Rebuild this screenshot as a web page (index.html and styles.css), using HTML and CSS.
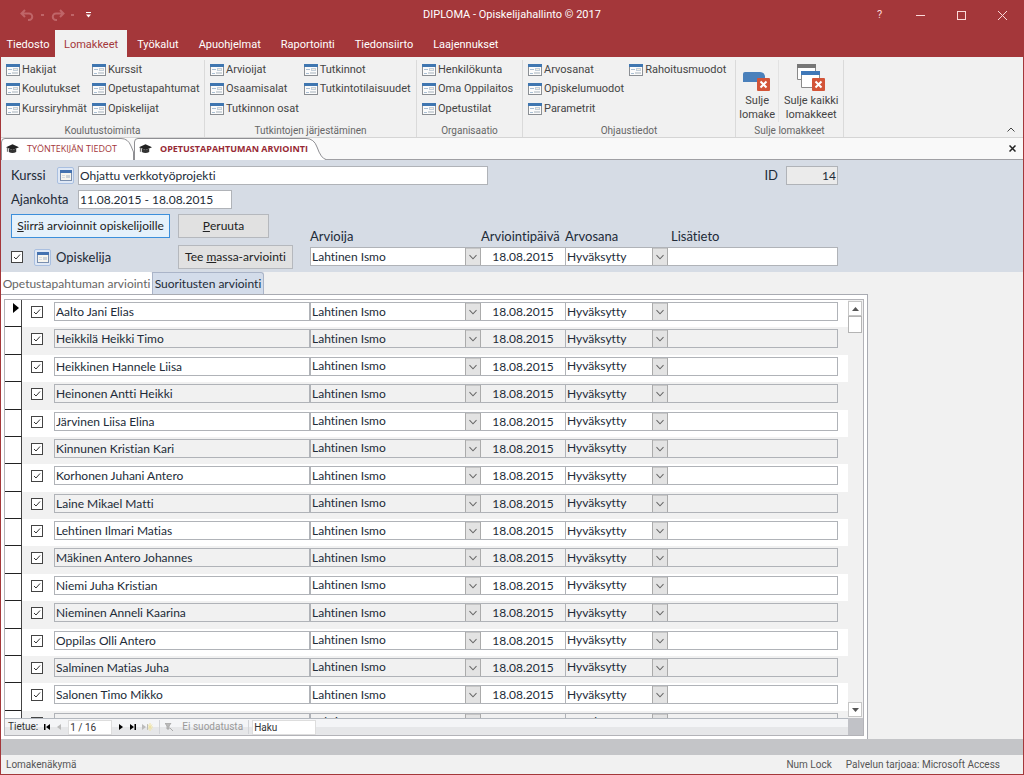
FILE: index.html
```html
<!DOCTYPE html>
<html lang="fi">
<head>
<meta charset="utf-8">
<meta name="viewport" content="width=device-width, initial-scale=1">
<title>DIPLOMA - Opiskelijahallinto</title>
<link rel="stylesheet" href="styles.css">
</head>
<body>
<svg class="defs" aria-hidden="true">
  <symbol id="form" viewBox="0 0 14 12">
    <rect x=".5" y=".5" width="13" height="11" fill="#fbfbfb" stroke="#8b8f94"/>
    <rect width="14" height="3" fill="#3f76b0"/>
    <path d="M2 5.500h4M2 9.500h3" stroke="#a9bfd4"/>
    <rect x="7.500" y="4.500" width="4" height="2" fill="#f5ede0" stroke="#c3cfda"/>
    <rect x="6.500" y="8.500" width="5" height="1" fill="#fff" stroke="#d0d6db"/>
  </symbol>
  <symbol id="calendar" viewBox="0 0 12 11">
    <rect x=".5" y=".5" width="11" height="10" fill="#f7f5ee" stroke="#7a8fae"/>
    <rect width="12" height="3" fill="#4472b0"/>
    <path d="M2 5.500h3M2 7.500h3" stroke="#d5dbe2"/>
    <rect x="6" y="5" width="4" height="3" fill="#cdd3d8"/>
  </symbol>
  <symbol id="cap" viewBox="0 0 14 10">
    <path d="M7 0 14 3 7 6 0 3Z" fill="#222"/>
    <path d="M3 4.500 7 6.200l4-1.700V8.200Q7 10.600 3 8.200Z" fill="#333"/>
    <path d="M1.500 3.500V8" stroke="#555"/>
  </symbol>
  <symbol id="xbadge" viewBox="0 0 13 13">
    <rect width="13" height="13" rx="1" fill="#d35438"/>
    <path d="m3.500 3.500 6 6m0-6-6 6" stroke="#fff" stroke-width="2"/>
  </symbol>
</svg>
<div class="window">
  <header class="titlebar">
    <div class="quick">
      <button aria-label="Kumoa"><svg width="15" height="12" viewBox="0 0 15 12"><path d="M5 1 1.500 4.500 5 8M2 4.500h7a3 3 0 0 1 0 6.500H8" fill="none" stroke="currentColor" stroke-width="2"/></svg></button>
      <span class="dot"></span>
      <button aria-label="Tee uudelleen"><svg width="15" height="12" viewBox="0 0 15 12"><path d="m10 1 3.500 3.500L10 8M13 4.500H6A3 3 0 0 0 6 11h1" fill="none" stroke="currentColor" stroke-width="2"/></svg></button>
      <span class="dot"></span>
      <button class="more" aria-label="Mukauta"><svg width="5" height="6" viewBox="0 0 5 6"><path d="M0 .5h5" stroke="#fff"/><path d="M0 2.500h5L2.500 5.500Z" fill="#fff"/></svg></button>
    </div>
    <h1>DIPLOMA - Opiskelijahallinto © 2017</h1>
    <div class="controls">
      <button aria-label="Ohje">?</button>
      <button aria-label="Pienennä"><svg width="9" height="9"><path d="M0 4.500h9" stroke="currentColor"/></svg></button>
      <button aria-label="Suurenna"><svg width="9" height="9"><rect x=".5" y=".5" width="8" height="8" fill="none" stroke="currentColor"/></svg></button>
      <button aria-label="Sulje"><svg width="9" height="9"><path d="m0 0 9 9m0-9-9 9" stroke="currentColor"/></svg></button>
    </div>
  </header>
  <nav class="menu">
    <button class="file">Tiedosto</button>
    <button class="current">Lomakkeet</button>
    <button>Työkalut</button>
    <button>Apuohjelmat</button>
    <button>Raportointi</button>
    <button>Tiedonsiirto</button>
    <button>Laajennukset</button>
  </nav>
  <div class="ribbon">
    <section class="group">
      <div class="commands">
        <button><svg><use href="#form"/></svg>Hakijat</button>
        <button><svg><use href="#form"/></svg>Koulutukset</button>
        <button><svg><use href="#form"/></svg>Kurssiryhmät</button>
        <button><svg><use href="#form"/></svg>Kurssit</button>
        <button><svg><use href="#form"/></svg>Opetustapahtumat</button>
        <button><svg><use href="#form"/></svg>Opiskelijat</button>
      </div>
      <h2>Koulutustoiminta</h2>
    </section>
    <section class="group">
      <div class="commands">
        <button><svg><use href="#form"/></svg>Arvioijat</button>
        <button><svg><use href="#form"/></svg>Osaamisalat</button>
        <button><svg><use href="#form"/></svg>Tutkinnon osat</button>
        <button><svg><use href="#form"/></svg>Tutkinnot</button>
        <button><svg><use href="#form"/></svg>Tutkintotilaisuudet</button>
      </div>
      <h2>Tutkintojen järjestäminen</h2>
    </section>
    <section class="group">
      <div class="commands">
        <button><svg><use href="#form"/></svg>Henkilökunta</button>
        <button><svg><use href="#form"/></svg>Oma Oppilaitos</button>
        <button><svg><use href="#form"/></svg>Opetustilat</button>
      </div>
      <h2>Organisaatio</h2>
    </section>
    <section class="group">
      <div class="commands">
        <button><svg><use href="#form"/></svg>Arvosanat</button>
        <button><svg><use href="#form"/></svg>Opiskelumuodot</button>
        <button><svg><use href="#form"/></svg>Parametrit</button>
        <button><svg><use href="#form"/></svg>Rahoitusmuodot</button>
      </div>
      <h2>Ohjaustiedot</h2>
    </section>
    <section class="group">
      <div class="large">
        <button><svg width="28" height="28" viewBox="0 0 28 28"><path d="M0 18V10q0-2 2-2h15q4 0 5 4v6Z" fill="#4a80bb"/><use href="#xbadge" x="14" y="14" width="13" height="13"/></svg>Sulje<br>lomake</button>
        <button><svg width="28" height="28" viewBox="0 0 28 28"><path d="M.5.500h18v15H.5Z" fill="#fff" stroke="#8a8a8a"/><path d="M0 0h19v4H0Z" fill="#777"/><path d="M4.500 8.500h18v15h-18Z" fill="#fff" stroke="#8a8a8a"/><path d="M4 7h19v4H4Z" fill="#3f78b8"/><use href="#xbadge" x="15" y="14" width="13" height="13"/></svg>Sulje kaikki<br>lomakkeet</button>
      </div>
      <h2>Sulje lomakkeet</h2>
    </section>
    <button class="collapse" aria-label="Kutista valintanauha"><svg width="8" height="5"><path d="m.5 4.500 3.500-3.500 3.500 3.500" fill="none" stroke="#444"/></svg></button>
  </div>
  <div class="doctabs">
    <button class="doctab"><svg class="shape" viewBox="0 0 133 22" preserveAspectRatio="none"><path d="M.5 22V4Q.5.500 4 .5H120Q127 .5 130 8L132.500 14V22" fill="#fff" stroke="#8f8f93"/></svg><svg class="cap"><use href="#cap"/></svg>TYÖNTEKIJÄN TIEDOT</button>
    <button class="doctab active"><svg class="shape" viewBox="0 0 192 22" preserveAspectRatio="none"><path d="M.5 22V4Q.5.500 4 .5H172Q180 .5 183 9 187 20.500 192 21.500V22" fill="#fff" stroke="#8f8f93"/></svg><svg class="cap"><use href="#cap"/></svg>OPETUSTAPAHTUMAN ARVIOINTI</button>
    <button class="close" aria-label="Sulje välilehti"><svg width="7" height="7"><path d="m.5.500 6 6m0-6-6 6" stroke="#222" stroke-width="1.500"/></svg></button>
  </div>
  <main>
    <form class="header">
      <div class="line">
        <label class="caption" for="course">Kurssi</label>
        <button type="button" class="pick" aria-label="Avaa kurssi"><svg><use href="#calendar"/></svg></button>
        <input class="course" id="course" value="Ohjattu verkkotyöprojekti">
        <label class="idlabel" for="id">ID</label>
        <input class="id" id="id" value="14" readonly>
      </div>
      <div class="line">
        <label class="caption wide" for="period">Ajankohta</label>
        <input class="period" id="period" value="11.08.2015 - 18.08.2015">
      </div>
      <div class="bulk">
        <div class="actions">
          <button type="button" class="push primary"><u>S</u>iirrä arvioinnit opiskelijoille</button>
          <button type="button" class="push cancel"><u>P</u>eruuta</button>
          <div class="student">
            <input type="checkbox" id="all" checked>
            <button type="button" class="pick" aria-label="Avaa opiskelija"><svg><use href="#calendar"/></svg></button>
            <label for="all">Opiskelija</label>
          </div>
          <button type="button" class="push"><span>Tee <u>m</u>assa-arviointi</span></button>
        </div>
        <div class="defaults">
          <label for="assessor">Arvioija</label>
          <label for="date">Arviointipäivä</label>
          <label for="grade">Arvosana</label>
          <label class="extra" for="info">Lisätieto</label>
          <select id="assessor"><option>Lahtinen Ismo</option></select>
          <input id="date" class="date" value="18.08.2015">
          <select id="grade"><option>Hyväksytty</option></select>
          <input id="info" class="info">
        </div>
      </div>
    </form>
    <div class="pagetabs">
      <button class="active">Opetustapahtuman arviointi</button>
      <button>Suoritusten arviointi</button>
    </div>
    <div class="page">
      <div class="subform">
        <div class="list">
          <table>
            <colgroup><col class="c-sel"><col class="c-check"><col class="c-name"><col class="c-assessor"><col class="c-date"><col class="c-grade"><col><col class="c-end"></colgroup>
            <tbody>
              <tr><th><svg width="6" height="10"><path d="M0 0 6 5 0 10Z"/></svg></th><td><input type="checkbox" aria-label="Valitse" checked></td><td><input aria-label="Opiskelija" value="Aalto Jani Elias"></td><td><select aria-label="Arvioija"><option>Lahtinen Ismo</option></select></td><td><input class="date" aria-label="Arviointipäivä" value="18.08.2015"></td><td><select aria-label="Arvosana"><option>Hyväksytty</option></select></td><td><input class="info" aria-label="Lisätieto"></td><td></td></tr>
              <tr><th></th><td><input type="checkbox" aria-label="Valitse" checked></td><td><input aria-label="Opiskelija" value="Heikkilä Heikki Timo"></td><td><select aria-label="Arvioija"><option>Lahtinen Ismo</option></select></td><td><input class="date" aria-label="Arviointipäivä" value="18.08.2015"></td><td><select aria-label="Arvosana"><option>Hyväksytty</option></select></td><td><input class="info" aria-label="Lisätieto"></td><td></td></tr>
              <tr><th></th><td><input type="checkbox" aria-label="Valitse" checked></td><td><input aria-label="Opiskelija" value="Heikkinen Hannele Liisa"></td><td><select aria-label="Arvioija"><option>Lahtinen Ismo</option></select></td><td><input class="date" aria-label="Arviointipäivä" value="18.08.2015"></td><td><select aria-label="Arvosana"><option>Hyväksytty</option></select></td><td><input class="info" aria-label="Lisätieto"></td><td></td></tr>
              <tr><th></th><td><input type="checkbox" aria-label="Valitse" checked></td><td><input aria-label="Opiskelija" value="Heinonen Antti Heikki"></td><td><select aria-label="Arvioija"><option>Lahtinen Ismo</option></select></td><td><input class="date" aria-label="Arviointipäivä" value="18.08.2015"></td><td><select aria-label="Arvosana"><option>Hyväksytty</option></select></td><td><input class="info" aria-label="Lisätieto"></td><td></td></tr>
              <tr><th></th><td><input type="checkbox" aria-label="Valitse" checked></td><td><input aria-label="Opiskelija" value="Järvinen Liisa Elina"></td><td><select aria-label="Arvioija"><option>Lahtinen Ismo</option></select></td><td><input class="date" aria-label="Arviointipäivä" value="18.08.2015"></td><td><select aria-label="Arvosana"><option>Hyväksytty</option></select></td><td><input class="info" aria-label="Lisätieto"></td><td></td></tr>
              <tr><th></th><td><input type="checkbox" aria-label="Valitse" checked></td><td><input aria-label="Opiskelija" value="Kinnunen Kristian Kari"></td><td><select aria-label="Arvioija"><option>Lahtinen Ismo</option></select></td><td><input class="date" aria-label="Arviointipäivä" value="18.08.2015"></td><td><select aria-label="Arvosana"><option>Hyväksytty</option></select></td><td><input class="info" aria-label="Lisätieto"></td><td></td></tr>
              <tr><th></th><td><input type="checkbox" aria-label="Valitse" checked></td><td><input aria-label="Opiskelija" value="Korhonen Juhani Antero"></td><td><select aria-label="Arvioija"><option>Lahtinen Ismo</option></select></td><td><input class="date" aria-label="Arviointipäivä" value="18.08.2015"></td><td><select aria-label="Arvosana"><option>Hyväksytty</option></select></td><td><input class="info" aria-label="Lisätieto"></td><td></td></tr>
              <tr><th></th><td><input type="checkbox" aria-label="Valitse" checked></td><td><input aria-label="Opiskelija" value="Laine Mikael Matti"></td><td><select aria-label="Arvioija"><option>Lahtinen Ismo</option></select></td><td><input class="date" aria-label="Arviointipäivä" value="18.08.2015"></td><td><select aria-label="Arvosana"><option>Hyväksytty</option></select></td><td><input class="info" aria-label="Lisätieto"></td><td></td></tr>
              <tr><th></th><td><input type="checkbox" aria-label="Valitse" checked></td><td><input aria-label="Opiskelija" value="Lehtinen Ilmari Matias"></td><td><select aria-label="Arvioija"><option>Lahtinen Ismo</option></select></td><td><input class="date" aria-label="Arviointipäivä" value="18.08.2015"></td><td><select aria-label="Arvosana"><option>Hyväksytty</option></select></td><td><input class="info" aria-label="Lisätieto"></td><td></td></tr>
              <tr><th></th><td><input type="checkbox" aria-label="Valitse" checked></td><td><input aria-label="Opiskelija" value="Mäkinen Antero Johannes"></td><td><select aria-label="Arvioija"><option>Lahtinen Ismo</option></select></td><td><input class="date" aria-label="Arviointipäivä" value="18.08.2015"></td><td><select aria-label="Arvosana"><option>Hyväksytty</option></select></td><td><input class="info" aria-label="Lisätieto"></td><td></td></tr>
              <tr><th></th><td><input type="checkbox" aria-label="Valitse" checked></td><td><input aria-label="Opiskelija" value="Niemi Juha Kristian"></td><td><select aria-label="Arvioija"><option>Lahtinen Ismo</option></select></td><td><input class="date" aria-label="Arviointipäivä" value="18.08.2015"></td><td><select aria-label="Arvosana"><option>Hyväksytty</option></select></td><td><input class="info" aria-label="Lisätieto"></td><td></td></tr>
              <tr><th></th><td><input type="checkbox" aria-label="Valitse" checked></td><td><input aria-label="Opiskelija" value="Nieminen Anneli Kaarina"></td><td><select aria-label="Arvioija"><option>Lahtinen Ismo</option></select></td><td><input class="date" aria-label="Arviointipäivä" value="18.08.2015"></td><td><select aria-label="Arvosana"><option>Hyväksytty</option></select></td><td><input class="info" aria-label="Lisätieto"></td><td></td></tr>
              <tr><th></th><td><input type="checkbox" aria-label="Valitse" checked></td><td><input aria-label="Opiskelija" value="Oppilas Olli Antero"></td><td><select aria-label="Arvioija"><option>Lahtinen Ismo</option></select></td><td><input class="date" aria-label="Arviointipäivä" value="18.08.2015"></td><td><select aria-label="Arvosana"><option>Hyväksytty</option></select></td><td><input class="info" aria-label="Lisätieto"></td><td></td></tr>
              <tr><th></th><td><input type="checkbox" aria-label="Valitse" checked></td><td><input aria-label="Opiskelija" value="Salminen Matias Juha"></td><td><select aria-label="Arvioija"><option>Lahtinen Ismo</option></select></td><td><input class="date" aria-label="Arviointipäivä" value="18.08.2015"></td><td><select aria-label="Arvosana"><option>Hyväksytty</option></select></td><td><input class="info" aria-label="Lisätieto"></td><td></td></tr>
              <tr><th></th><td><input type="checkbox" aria-label="Valitse" checked></td><td><input aria-label="Opiskelija" value="Salonen Timo Mikko"></td><td><select aria-label="Arvioija"><option>Lahtinen Ismo</option></select></td><td><input class="date" aria-label="Arviointipäivä" value="18.08.2015"></td><td><select aria-label="Arvosana"><option>Hyväksytty</option></select></td><td><input class="info" aria-label="Lisätieto"></td><td></td></tr>
              <tr><th></th><td><input type="checkbox" aria-label="Valitse" checked></td><td><input aria-label="Opiskelija" value="Timörönen Aliza Maija"></td><td><select aria-label="Arvioija"><option>Lahtinen Ismo</option></select></td><td><input class="date" aria-label="Arviointipäivä" value="18.08.2015"></td><td><select aria-label="Arvosana"><option>Hyväksytty</option></select></td><td><input class="info" aria-label="Lisätieto"></td><td></td></tr>
            </tbody>
          </table>
        </div>
        <div class="scroll">
          <button aria-label="Ylös"><svg width="7" height="4"><path d="M0 4 3.500 0 7 4Z"/></svg></button>
          <div class="thumb"></div>
          <button class="down" aria-label="Alas"><svg width="7" height="4"><path d="M0 0h7L3.500 4Z"/></svg></button>
        </div>
        <div class="recordnav">
          <label for="record">Tietue:</label>
          <button aria-label="Ensimmäinen"><svg width="6" height="6"><path d="M0 0h1.500v6H0ZM6 0v6L2 3Z"/></svg></button>
          <button aria-label="Edellinen" disabled><svg width="6" height="6"><path d="M5 0v6L1 3Z"/></svg></button>
          <input id="record" value="1 / 16">
          <button aria-label="Seuraava"><svg width="6" height="6"><path d="M1 0v6l4-3Z"/></svg></button>
          <button aria-label="Viimeinen"><svg width="6" height="6"><path d="M6 0H4.500v6H6ZM0 0v6l4-3Z"/></svg></button>
          <button aria-label="Uusi" disabled><svg width="11" height="8"><path d="M0 1v6l4-3Z"/><path d="M5 1h1v6H5Z"/><path d="M8 0v8M6 4h5M6 1.500l4 5m0-5-4 5" stroke="#efe3a4"/></svg></button>
          <button class="filter" disabled><svg width="8" height="8"><path d="M0 0h6L4 3v3H2V3ZM5 5l3 3" stroke="#aaa"/></svg>Ei suodatusta</button>
          <input class="search" aria-label="Haku" value="Haku">
        </div>
        <div class="corner"></div>
      </div>
    </div>
    <div class="footer"></div>
  </main>
  <footer class="status">
    <span>Lomakenäkymä</span>
    <span class="lock">Num Lock</span>
    <span>Palvelun tarjoaa: Microsoft Access</span>
  </footer>
</div>
</body>
</html>
```
FILE: styles.css
```css
* { box-sizing: border-box; }
body {
  margin: 0;
  font: 11px/14px Roboto, "Noto Sans", sans-serif;
  font-variant-ligatures: none;
  color: #444;
}
button, input, select { margin: 0; font: inherit; font-variant-ligatures: none; color: inherit; }
button {
  display: flex;
  align-items: center;
  justify-content: center;
  padding: 0;
  border: 0;
  background: none;
  white-space: nowrap;
}
h1, h2 { margin: 0; font: inherit; }
.defs { position: absolute; width: 0; height: 0; }
.window {
  display: flex;
  flex-direction: column;
  height: 100vh;
  border: 1px solid #a4373a;
  border-top: 0;
  background: #f1f1f1;
}

/* Title bar and menu */
.titlebar {
  display: grid;
  grid-template-columns: 1fr auto 1fr;
  align-items: center;
  height: 30px;
  background: #a4373a;
  color: #fff;
}
.quick { display: flex; align-items: center; gap: 6px; padding-left: 19px; color: #bf6568; }
.quick .more { margin-left: 6px; }
.dot { width: 3px; height: 2px; background: #bf6568; }
.controls { display: flex; justify-content: flex-end; color: #fbd9d9; }
.controls button { width: 41px; }
.menu { display: flex; height: 27px; background: #a4373a; color: #fff; }
.menu button { padding: 2px 10px 0; }
.menu .file { width: 54px; padding: 2px 0 0; }
.menu .current { padding: 2px 9px 0; background: #f1f1f1; color: #a4373a; }

/* Ribbon */
.ribbon {
  display: grid;
  grid-template-columns: 204px 212px 106px 213px 108px 1fr;
  height: 81px;
  border-bottom: 1px solid #d5d5d5;
}
.group {
  display: flex;
  flex-direction: column;
  justify-content: space-between;
  margin: 3px 0 0;
  border-right: 1px solid #dadada;
}
.commands {
  display: grid;
  grid-auto-flow: column;
  grid-template-rows: 19px 20px 19px;
  grid-auto-columns: max-content;
  column-gap: 5px;
  padding-left: 5px;
}
.commands button { justify-content: flex-start; gap: 2px; }
.commands svg { width: 14px; height: 12px; }
.group h2 { font-size: 10px; line-height: 13px; text-align: center; color: #666; }
.large { display: flex; }
.large button { flex-direction: column; flex: 2; padding-top: 4px; }
.large button + button { flex: 3; border-left: 1px solid #e2e2e2; }
.large svg { margin-bottom: 2px; }
.collapse { align-self: end; justify-self: end; padding: 5px 8px; }

/* Document tabs */
.doctabs { display: flex; height: 22px; background: #f9f9f9; border-bottom: 1px solid #a0a0a4; }
.doctab { position: relative; z-index: 0; justify-content: flex-start; gap: 8px; width: 133px; height: 22px; padding-left: 5px; font-family: "Open Sans", "Noto Sans", sans-serif; font-size: 9px; color: #a4373a; }
.doctab.active { z-index: 1; width: 192px; font-weight: 700; color: #972a35; }
.shape { position: absolute; inset: 0; z-index: -1; width: 100%; height: 100%; }
.cap { flex: none; width: 13px; height: 10px; }
.close { margin-left: auto; width: 22px; }

/* Form controls */
main {
  display: flex;
  flex: 1;
  flex-direction: column;
  min-height: 0;
  font: 12px/16px Lato, "Noto Sans", sans-serif;
  font-variant-ligatures: none;
  color: #222b38;
}
main input:not([type="checkbox"]), main select {
  display: block;
  width: 100%;
  min-width: 0;
  height: 19px;
  padding: 0 1px;
  border: 1px solid #b0b3b8;
  border-radius: 0;
  background-color: #fff;
}
main select {
  appearance: none;
  background: #fff url("data:image/svg+xml,%3Csvg xmlns='http://www.w3.org/2000/svg' width='16' height='18'%3E%3Crect x='.5' y='.5' width='15' height='17' fill='%23e3e3e3' stroke='%23ababab'/%3E%3Cpath d='m4.500 7.500 3.500 3.500 3.500-3.500' fill='none' stroke='%23666'/%3E%3C/svg%3E") no-repeat right center;
}
input[type="checkbox"] {
  appearance: none;
  display: block;
  width: 12px;
  height: 12px;
  margin: 0;
  border: 1px solid #444;
  background: #fff url("data:image/svg+xml,%3Csvg xmlns='http://www.w3.org/2000/svg' width='10' height='10'%3E%3Cpath d='m2 5 2 2 4-4.500' fill='none' stroke='%23333'/%3E%3C/svg%3E") no-repeat center;
}
main input.date { border-left: 0; text-align: center; }
main input.info { border-left: 0; }
main select, main input.date { border-right: 0; }

/* Form header */
.header { padding: 5px 10px 3px; background: #d6dce5; }
.line { display: flex; align-items: center; height: 20px; margin-bottom: 4px; font-size: 13px; }
.line input { font-size: 12px; }
.caption { width: 46px; }
.caption.wide { width: 67px; }
.pick { width: 17px; height: 17px; margin-right: 4px; border: 1px solid #a9bfe0; border-radius: 2px; background: #dfe8f5; }
.pick svg { width: 12px; height: 11px; }
.line .course { width: 410px; }
.idlabel { margin-left: auto; margin-right: 8px; }
.line .id { width: 52px; margin-right: 175px; text-align: right; background: #ebebeb; }
.line .period { width: 154px; }
.bulk { display: flex; padding-top: 1px; }
.actions {
  display: grid;
  grid-template-columns: 159px 115px;
  grid-template-rows: 24px 24px;
  gap: 7px 8px;
  width: 299px;
}
.push { border: 1px solid #b5b8bd; background: #e1e1e1; color: #222; }
.push.primary { border-color: #3c8fdb; background: #e5f1fb; }
.push.cancel { width: 91px; }
.student { display: flex; align-items: center; font-size: 13px; }
.student .pick { margin: 0 5px 0 11px; }
.defaults {
  display: grid;
  flex: 1;
  grid-template-columns: 171px 84px 103px 1fr;
  align-content: end;
  margin-right: 175px;
  padding-bottom: 3px;
}
.defaults label { font-size: 13px; margin-bottom: 3px; white-space: nowrap; }
.defaults .extra { padding-left: 3px; }

/* Page tabs */
.pagetabs { display: flex; height: 22px; }
.pagetabs button { width: 112px; border: 1px solid #aab4c8; border-bottom: 0; border-radius: 0 3px 0 0; background: #d3dcea; }
.pagetabs .active { width: 151px; background: #fff; border-color: #fff; color: #666; }
.page {
  display: flex;
  flex: 1;
  min-height: 0;
  margin-right: 155px;
  padding: 4px 3px 3px;
  border: 1px solid #a9abb2;
  border-width: 1px 1px 0 0;
  background: #fff;
}

/* Continuous list */
.subform {
  display: grid;
  flex: 1;
  grid-template-columns: 1fr 15px;
  grid-template-rows: minmax(0, 1fr) 17px;
  border: 1px solid #b3b3b8;
  min-width: 0;
}
.list { overflow: hidden; min-height: 0; }
.list table { width: 100%; height: 438px; table-layout: fixed; border-collapse: separate; border-spacing: 0; }
.c-sel { width: 17px; }
.c-check { width: 32px; }
.c-name { width: 256px; }
.c-assessor { width: 171px; }
.c-date { width: 84px; }
.c-grade { width: 103px; }
.c-end { width: 10px; }
.list td { padding: 2px 0 0; vertical-align: top; }
.list th { padding: 0; border-right: 1px solid #444; border-bottom: 1px solid #222; background: #fff; vertical-align: top; }
.list th svg { display: block; margin: 3px 2px 0 auto; }
.list td input[type="checkbox"] { margin: 4px 0 0 9px; }
.list tr:nth-child(even) td { background: #f1f1f1; }
.list tr:nth-child(even) input:not([type="checkbox"]), .list tr:nth-child(even) select { background-color: #f1f1f1; }
.scroll { display: flex; flex-direction: column; padding: 1px 1px 1px 0; background: #f1f1f1; }
.scroll button { height: 15px; border: 1px solid #c6c6c6; background: #fff; }
.scroll svg { fill: #555; }
.thumb { height: 17px; border: 1px solid #b4b4b4; background: #fff; }
.scroll .down { margin-top: auto; }
.recordnav {
  display: flex;
  align-items: center;
  gap: 6px;
  padding-left: 3px;
  border-top: 1px solid #b3b8bf;
  background: linear-gradient(#f4f5f7 50%, #e6e7e9 50%);
  font: 10px/14px Roboto, "Noto Sans", sans-serif;
  color: #333;
}
.recordnav label { white-space: nowrap; }
.recordnav button:disabled { color: #999; }
.recordnav button:disabled svg { fill: #bbb; }
main .recordnav input { width: 44px; height: 15px; border-color: #ddd; }
main .recordnav .search { width: 64px; margin-left: -3px; }
.recordnav .filter { gap: 9px; width: 90px; border: 1px solid #d2d4d8; border-width: 0 1px; }
.corner { background: #c1c2c7; }
.footer { height: 16px; background: #c4c5c8; }
.status { display: flex; align-items: center; height: 19px; padding: 0 23px 0 5px; font-size: 10px; color: #555; }
.lock { margin-left: auto; margin-right: 14px; }
```
